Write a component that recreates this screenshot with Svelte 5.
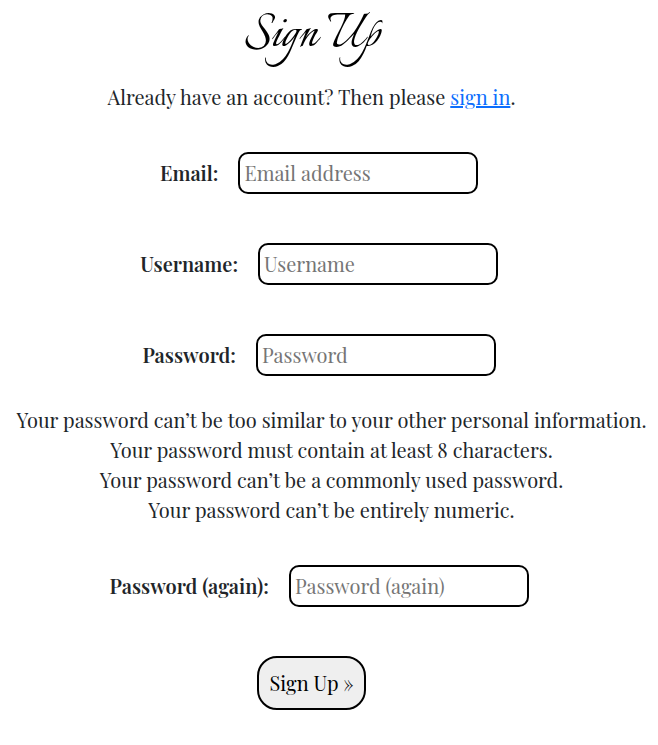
<script>
  const fields = [
    { id: 'email', label: 'Email:', hint: 'Email address', type: 'email' },
    { id: 'username', label: 'Username:', hint: 'Username', type: 'text' },
    { id: 'password', label: 'Password:', hint: 'Password', type: 'password' },
    { id: 'again', label: 'Password (again):', hint: 'Password (again)', type: 'password' }
  ];
</script>

{#snippet field(f)}
  <div class="row {f.id}">
    <label for={f.id}>{f.label}</label>
    <input id={f.id} type={f.type} placeholder={f.hint} />
  </div>
{/snippet}

<main>
  <h1>Sign Up</h1>
  <p class="intro">Already have an account? Then please <a href="#signin">sign in</a>.</p>
  <form onsubmit={(e) => e.preventDefault()}>
    {@render field(fields[0])}
    {@render field(fields[1])}
    {@render field(fields[2])}
    <ul>
      <li>Your password can’t be too similar to your other personal information.</li>
      <li>Your password must contain at least 8 characters.</li>
      <li>Your password can’t be a commonly used password.</li>
      <li>Your password can’t be entirely numeric.</li>
    </ul>
    {@render field(fields[3])}
    <button type="submit">Sign Up »</button>
  </form>
</main>

<style>
  :global(body) {
    background: #fff;
  }
  main {
    width: 658px;
    color: #212529;
    font: 20px/30px "Playfair Display", "Liberation Serif", serif;
  }
  h1 {
    margin: 0;
    width: 623px;
    height: 72px;
    text-align: center;
    color: #000;
    font: 400 60px/72px "Italianno", "Liberation Serif", cursive;
  }
  .intro {
    margin: 10px 0 40px;
    width: 623px;
    text-align: center;
  }
  a {
    color: #0d6efd;
    text-decoration: underline;
  }
  form {
    display: flex;
    flex-direction: column;
  }
  .row {
    display: flex;
    align-items: center;
    justify-content: center;
    gap: 20px;
    width: 638.4px;
    height: 42px;
    margin-bottom: 49px;
  }
  label {
    font-weight: 600;
    white-space: nowrap;
  }
  input {
    box-sizing: border-box;
    width: 240px;
    height: 42px;
    padding: 1px 4px 2px;
    border: 2px solid #000;
    border-radius: 10px;
    background: #fff;
    color: #212529;
    font: inherit;
  }
  input::placeholder {
    color: #757575;
    opacity: 1;
  }
  .row.password {
    margin-bottom: 29px;
  }
  ul {
    box-sizing: border-box;
    width: 658px;
    margin: 0 0 40px;
    padding: 0 0 0 5px;
    list-style: none;
    text-align: center;
    white-space: nowrap;
  }
  button {
    width: 109px;
    height: 54px;
    margin-left: 257px;
    padding: 0;
    border: 2px solid #000;
    border-radius: 20px;
    background: #efefef;
    color: #000;
    font: inherit;
  }
</style>
